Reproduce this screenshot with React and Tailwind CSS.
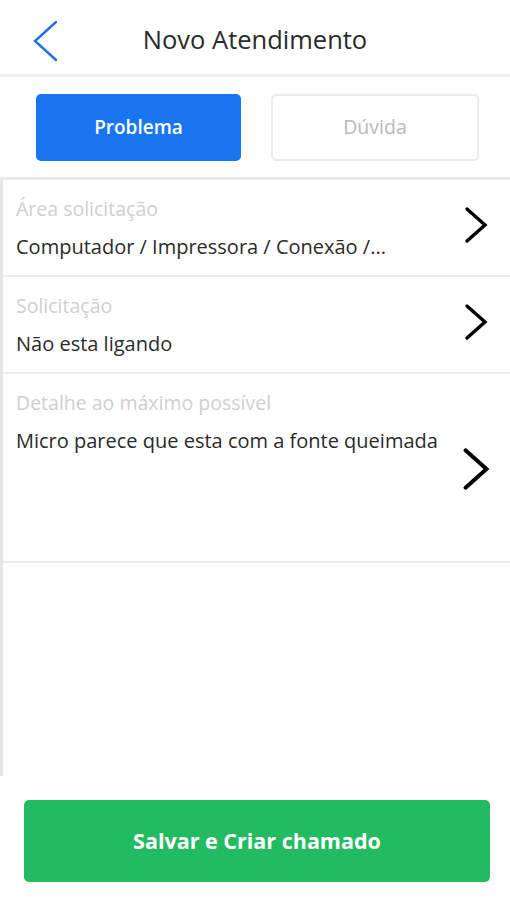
import React from "react";

const Chevron = ({ className }) => (
  <svg viewBox="0 0 24 36" className={className} fill="none" stroke="currentColor" strokeWidth="3.4" strokeLinecap="round" strokeLinejoin="miter">
    <path d="M3 2 L21 18 L3 34" />
  </svg>
);

function Row({ label, value, tall, chevronCls }) {
  return (
    <div className={`flex border-b-2 border-[#ececec] ${tall ? "h-[189px]" : "h-[97px]"}`}>
      <div className="flex-1 pl-[13px] pt-[17px]">
        <div className="text-[19.5px] leading-[24px] text-[#cfcfcf]">{label}</div>
        <div className="mt-[13px] text-[20px] leading-[26px] text-[#2b2b2b]">{value}</div>
      </div>
      <div className={`flex w-[68px] justify-center ${tall ? "items-center pt-[2px]" : "items-start pt-[26px]"}`}>
        <Chevron className={chevronCls} />
      </div>
    </div>
  );
}

export default function App() {
  return (
    <div className="flex h-[900px] w-[510px] flex-col bg-white" style={{ fontFamily: '"Open Sans", "Noto Sans", sans-serif' }}>
      <div className="relative flex h-[77px] items-center justify-center border-b-[3px] border-[#f0f0f0]">
        <svg viewBox="0 0 26 42" className="absolute left-[32px] top-[20px] h-[42px] w-[26px] text-[#1f6fe5]" fill="none" stroke="currentColor" strokeWidth="2.4" strokeLinecap="round">
          <path d="M24 2 L3 21 L24 40" />
        </svg>
        <span className="mt-[4px] text-[25.5px] text-[#2a2a2a]">Novo Atendimento</span>
      </div>
      <div className="flex h-[103px] items-center justify-between border-b-[3px] border-[#e8e8e8] pl-[36px] pr-[31px]">
        <div className="flex h-[67px] w-[205px] items-center justify-center rounded-[5px] bg-[#1a76f0] text-[19px] font-semibold text-white">Problema</div>
        <div className="flex h-[67px] w-[208px] items-center justify-center rounded-[5px] border-2 border-[#ebebeb] text-[19.5px] text-[#b9b9b9]">Dúvida</div>
      </div>
      <div className="h-[596px] border-l-[3px] border-[#e6e6e6]">
        <Row label="Área solicitação" value="Computador / Impressora / Conexão /..." chevronCls="h-[38px] w-[24px] text-black" />
        <Row label="Solicitação" value="Não esta ligando" chevronCls="h-[38px] w-[24px] text-black" />
        <Row label="Detalhe ao máximo possível" value="Micro parece que esta com a fonte queimada" tall chevronCls="h-[50px] w-[28px] text-black" />
      </div>
      <div className="flex flex-1 items-start pl-[24px] pt-[24px]">
        <div className="flex h-[82px] w-[466px] items-center justify-center rounded-[5px] bg-[#23bb61] text-[21.5px] font-bold text-white">Salvar e Criar chamado</div>
      </div>
    </div>
  );
}
